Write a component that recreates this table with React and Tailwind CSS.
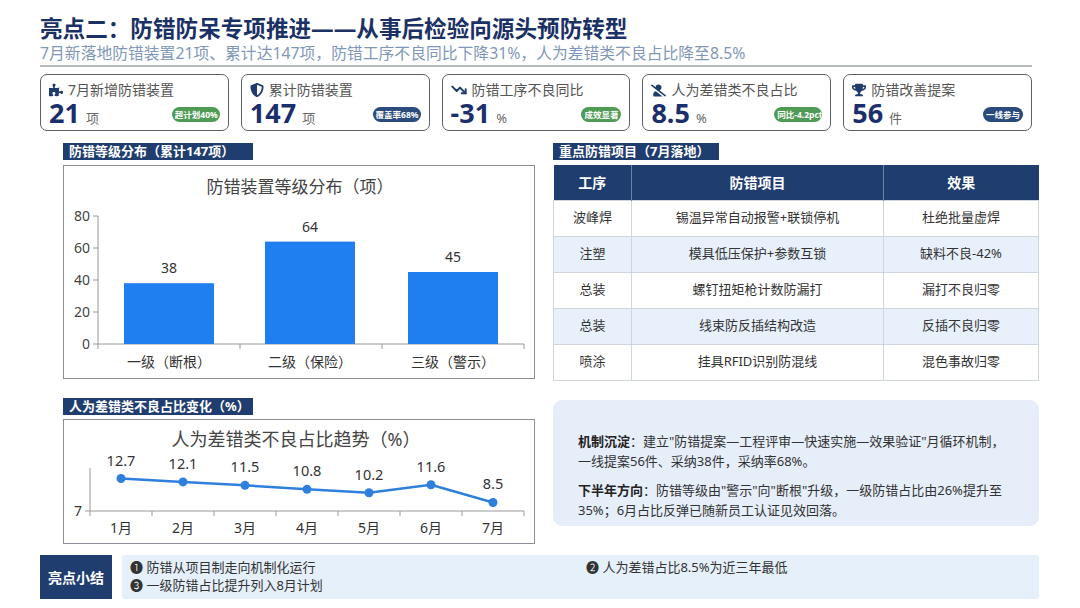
import { FaPuzzlePiece, FaShieldAlt, FaTrophy, FaUserSlash } from 'react-icons/fa'
import { TrendingDown } from 'lucide-react'

const kpis = [
  { icon: 'puzzle', label: '7月新增防错装置', value: '21', unit: '项', badge: '超计划40%', tone: 'green' },
  { icon: 'shield', label: '累计防错装置', value: '147', unit: '项', badge: '覆盖率68%', tone: 'navy' },
  { icon: 'trend', label: '防错工序不良同比', value: '-31', unit: '%', badge: '成效显著', tone: 'green' },
  { icon: 'user', label: '人为差错类不良占比', value: '8.5', unit: '%', badge: '同比-4.2pct', tone: 'green' },
  { icon: 'trophy', label: '防错改善提案', value: '56', unit: '件', badge: '一线参与', tone: 'navy' },
]

const rows = [
  ['波峰焊', '锡温异常自动报警+联锁停机', '杜绝批量虚焊'],
  ['注塑', '模具低压保护+参数互锁', '缺料不良-42%'],
  ['总装', '螺钉扭矩枪计数防漏打', '漏打不良归零'],
  ['总装', '线束防反插结构改造', '反插不良归零'],
  ['喷涂', '挂具RFID识别防混线', '混色事故归零'],
]

const bars = [
  { label: '一级（断根）', v: 38, x: 60 },
  { label: '二级（保险）', v: 64, x: 201 },
  { label: '三级（警示）', v: 45, x: 344 },
]

const trend = [12.7, 12.1, 11.5, 10.8, 10.2, 11.6, 8.5]

function KpiIcon({ name }) {
  const cls = 'text-[#1f3a6b] shrink-0'
  if (name === 'puzzle') return <FaPuzzlePiece className={cls} size={14} />
  if (name === 'shield') return <FaShieldAlt className={cls} size={14} />
  if (name === 'trend') return <TrendingDown className={cls} size={16} strokeWidth={3} />
  if (name === 'user') return <FaUserSlash className={cls} size={15} />
  return <FaTrophy className={cls} size={14} />
}

function SectionTag({ children, w }) {
  return (
    <div className={`h-[17px] ${w} bg-[#1f3d6f] text-white text-[13px] font-bold leading-[17px] px-[6px] whitespace-nowrap`}>
      {children}
    </div>
  )
}

function BarChart() {
  return (
    <svg width="470" height="212" className="block">
      <text x="236" y="27" textAnchor="middle" fontSize="17" fill="#444">防错装置等级分布（项）</text>
      {[80, 60, 40, 20, 0].map((t, i) => (
        <g key={t}>
          <text x="26" y={50 + i * 32 + 5} textAnchor="end" fontSize="14" fill="#444">{t}</text>
          <line x1="29" x2="34" y1={50 + i * 32} y2={50 + i * 32} stroke="#999" />
        </g>
      ))}
      <line x1="34" x2="34" y1="50" y2="178" stroke="#999" />
      <line x1="34" x2="460" y1="178" y2="178" stroke="#999" />
      {[34, 176, 318, 460].map(x => <line key={x} x1={x} x2={x} y1="178" y2="183" stroke="#999" />)}
      {bars.map(b => {
        const h = b.v * 1.6
        return (
          <g key={b.label}>
            <rect x={b.x} y={178 - h} width="90" height={h} fill="#1f7ff0" />
            <text x={b.x + 45} y={178 - h - 10} textAnchor="middle" fontSize="14" fill="#333">{b.v}</text>
            <text x={b.x + 45} y="201" textAnchor="middle" fontSize="14" fill="#333">{b.label}</text>
          </g>
        )
      })}
    </svg>
  )
}

function LineChart() {
  const pts = trend.map((v, i) => [26 + (i + 0.5) * 62, 91 - (v - 7) * 5.7])
  return (
    <svg width="470" height="123" className="block">
      <text x="232" y="26" textAnchor="middle" fontSize="18" fill="#444">人为差错类不良占比趋势（%）</text>
      <line x1="26" x2="26" y1="48" y2="91" stroke="#999" />
      <line x1="21" x2="460" y1="91" y2="91" stroke="#999" />
      <text x="18" y="96" textAnchor="end" fontSize="14" fill="#333">7</text>
      {[0, 1, 2, 3, 4, 5, 6, 7].map(i => <line key={i} x1={26 + i * 62} x2={26 + i * 62} y1="91" y2="96" stroke="#999" />)}
      <polyline points={pts.map(p => p.join(',')).join(' ')} fill="none" stroke="#2f7fdc" strokeWidth="2.5" />
      {pts.map(([x, y], i) => (
        <g key={i}>
          <circle cx={x} cy={y} r="4.5" fill="#2f7fdc" />
          <text x={x} y={y - 13} textAnchor="middle" fontSize="14.5" fill="#333">{trend[i]}</text>
          <text x={x} y="113" textAnchor="middle" fontSize="14" fill="#333">{i + 1}月</text>
        </g>
      ))}
    </svg>
  )
}

export default function App() {
  return (
    <div className="w-[1080px] h-[608px] bg-white overflow-hidden font-['Noto_Sans','Noto_Sans_CJK_SC',sans-serif] text-[#333]">
      <div className="pl-[40px] pr-[48px] pt-[14px]">
        <h1 className="text-[22.6px] font-bold leading-[30px] text-[#1b3166] whitespace-nowrap">亮点二：防错防呆专项推进——从事后检验向源头预防转型</h1>
        <p className="text-[15.8px] leading-[19px] text-[#7f97b8] whitespace-nowrap">7月新落地防错装置21项、累计达147项，防错工序不良同比下降31%，人为差错类不良占比降至8.5%</p>
        <div className="mt-[2px] h-[2px] bg-[#b5bac2]" />

        <div className="mt-[7px] flex gap-[12px]">
          {kpis.map(k => (
            <div key={k.label} className="flex-1 h-[57px] border-[1.5px] border-[#5b606b] rounded-[7px] px-[8px] pt-[6px] flex flex-col">
              <div className="flex items-center gap-[5px] h-[18px]">
                <KpiIcon name={k.icon} />
                <span className="text-[14px] text-[#555] leading-[18px] whitespace-nowrap">{k.label}</span>
              </div>
              <div className="flex items-end">
                <span className="text-[27px] font-bold leading-[28px] text-[#1a2f6b]">{k.value}</span>
                <span className="ml-[6px] text-[13px] text-[#666] leading-[18px]">{k.unit}</span>
                <span className={`ml-auto mb-[5px] h-[15px] max-w-[48px] px-[3px] rounded-full overflow-hidden text-[8.5px] font-bold text-white leading-[15px] whitespace-nowrap ${k.tone === 'green' ? 'bg-[#4f9b55]' : 'bg-[#2a4b7c]'}`}>{k.badge}</span>
              </div>
            </div>
          ))}
        </div>
      </div>

      <div className="mt-[12px] pl-[63px] flex gap-[18px]">
        <div className="w-[472px]">
          <SectionTag w="w-[190px]">防错等级分布（累计147项）</SectionTag>
          <div className="mt-[5px] h-[214px] border border-[#8a8f98]">
            <BarChart />
          </div>
          <div className="mt-[19px]">
            <SectionTag w="w-[190px]">人为差错类不良占比变化（%）</SectionTag>
            <div className="mt-[4px] h-[125px] border border-[#8a8f98]">
              <LineChart />
            </div>
          </div>
        </div>

        <div className="w-[486px]">
          <SectionTag w="w-[166px]">重点防错项目（7月落地）</SectionTag>
          <table className="mt-[5px] w-full border-collapse text-[13px] text-center">
            <thead>
              <tr className="h-[35px] bg-[#1f3d6f] text-white font-bold text-[14px]">
                <th className="w-[78px] border-r border-[#6d82a6]">工序</th>
                <th className="w-[252px] border-r border-[#6d82a6]">防错项目</th>
                <th>效果</th>
              </tr>
            </thead>
            <tbody>
              {rows.map((r, i) => (
                <tr key={i} className={`h-[36px] ${i % 2 ? 'bg-[#e8f0fb]' : 'bg-white'}`}>
                  {r.map((c, j) => <td key={j} className="border border-[#cfd6e0] text-[#333]">{c}</td>)}
                </tr>
              ))}
            </tbody>
          </table>

          <div className="mt-[19px] h-[126px] rounded-[9px] bg-[#e6eefa] px-[25px] pt-[31px] text-[13px] leading-[20px] text-[#333]">
            <p><b className="text-[#222]">机制沉淀</b>：建立"防错提案—工程评审—快速实施—效果验证"月循环机制，一线提案56件、采纳38件，采纳率68%。</p>
            <p className="mt-[9px]"><b className="text-[#222]">下半年方向</b>：防错等级由"警示"向"断根"升级，一级防错占比由26%提升至35%；6月占比反弹已随新员工认证见效回落。</p>
          </div>
        </div>
      </div>

      <div className="mt-[11px] ml-[40px] w-[999px] h-[44px] flex gap-[10px]">
        <div className="w-[72px] bg-[#1f3d6f] text-white font-bold text-[14px] flex items-center justify-center">亮点小结</div>
        <div className="flex-1 bg-[#e6f0fb] rounded-[3px] px-[8px] py-[4px] grid grid-cols-[456px_1fr] text-[13px] leading-[17px] text-[#333]">
          <span>❶ 防错从项目制走向机制化运行</span>
          <span>❷ 人为差错占比8.5%为近三年最低</span>
          <span>❸ 一级防错占比提升列入8月计划</span>
        </div>
      </div>
    </div>
  )
}
